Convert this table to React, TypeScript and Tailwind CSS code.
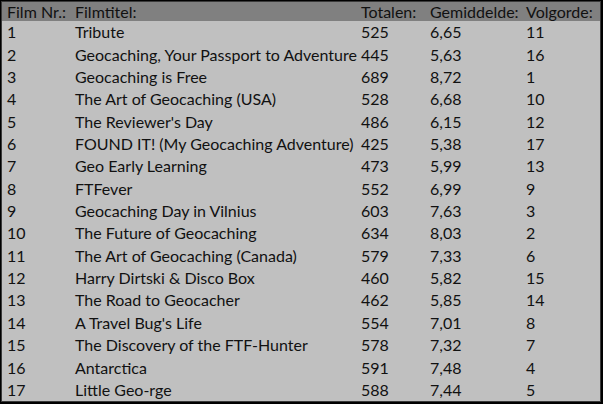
const rows: [string, string, string, string, string][] = [
  ["1", "Tribute", "525", "6,65", "11"],
  ["2", "Geocaching, Your Passport to Adventure", "445", "5,63", "16"],
  ["3", "Geocaching is Free", "689", "8,72", "1"],
  ["4", "The Art of Geocaching (USA)", "528", "6,68", "10"],
  ["5", "The Reviewer's Day", "486", "6,15", "12"],
  ["6", "FOUND IT! (My Geocaching Adventure)", "425", "5,38", "17"],
  ["7", "Geo Early Learning", "473", "5,99", "13"],
  ["8", "FTFever", "552", "6,99", "9"],
  ["9", "Geocaching Day in Vilnius", "603", "7,63", "3"],
  ["10", "The Future of Geocaching", "634", "8,03", "2"],
  ["11", "The Art of Geocaching (Canada)", "579", "7,33", "6"],
  ["12", "Harry Dirtski & Disco Box", "460", "5,82", "15"],
  ["13", "The Road to Geocacher", "462", "5,85", "14"],
  ["14", "A Travel Bug's Life", "554", "7,01", "8"],
  ["15", "The Discovery of the FTF-Hunter", "578", "7,32", "7"],
  ["16", "Antarctica", "591", "7,48", "4"],
  ["17", "Little Geo-rge", "588", "7,44", "5"],
];

const cols = "grid grid-cols-[68px_286px_69px_96px_1fr] items-center pl-[5px]";

export default function App() {
  return (
    <div className="w-[603px] h-[404px] bg-black pt-px pl-px pr-[2px] pb-[2px] font-['Lato','Open_Sans',sans-serif] text-[16px] text-[#111]">
      <div className="h-full border border-[#3a3a3a] bg-[#c0c0c0] flex flex-col">
        <div className={`${cols} h-[19px] bg-[#808080] leading-none`}>
          <span>Film Nr.:</span>
          <span>Filmtitel:</span>
          <span>Totalen:</span>
          <span>Gemiddelde:</span>
          <span>Volgorde:</span>
        </div>
        {rows.map((r) => (
          <div key={r[0]} className={`${cols} flex-1 leading-none`}>
            <span>{r[0]}</span>
            <span className="whitespace-nowrap">{r[1]}</span>
            <span>{r[2]}</span>
            <span>{r[3]}</span>
            <span>{r[4]}</span>
          </div>
        ))}
      </div>
    </div>
  );
}
